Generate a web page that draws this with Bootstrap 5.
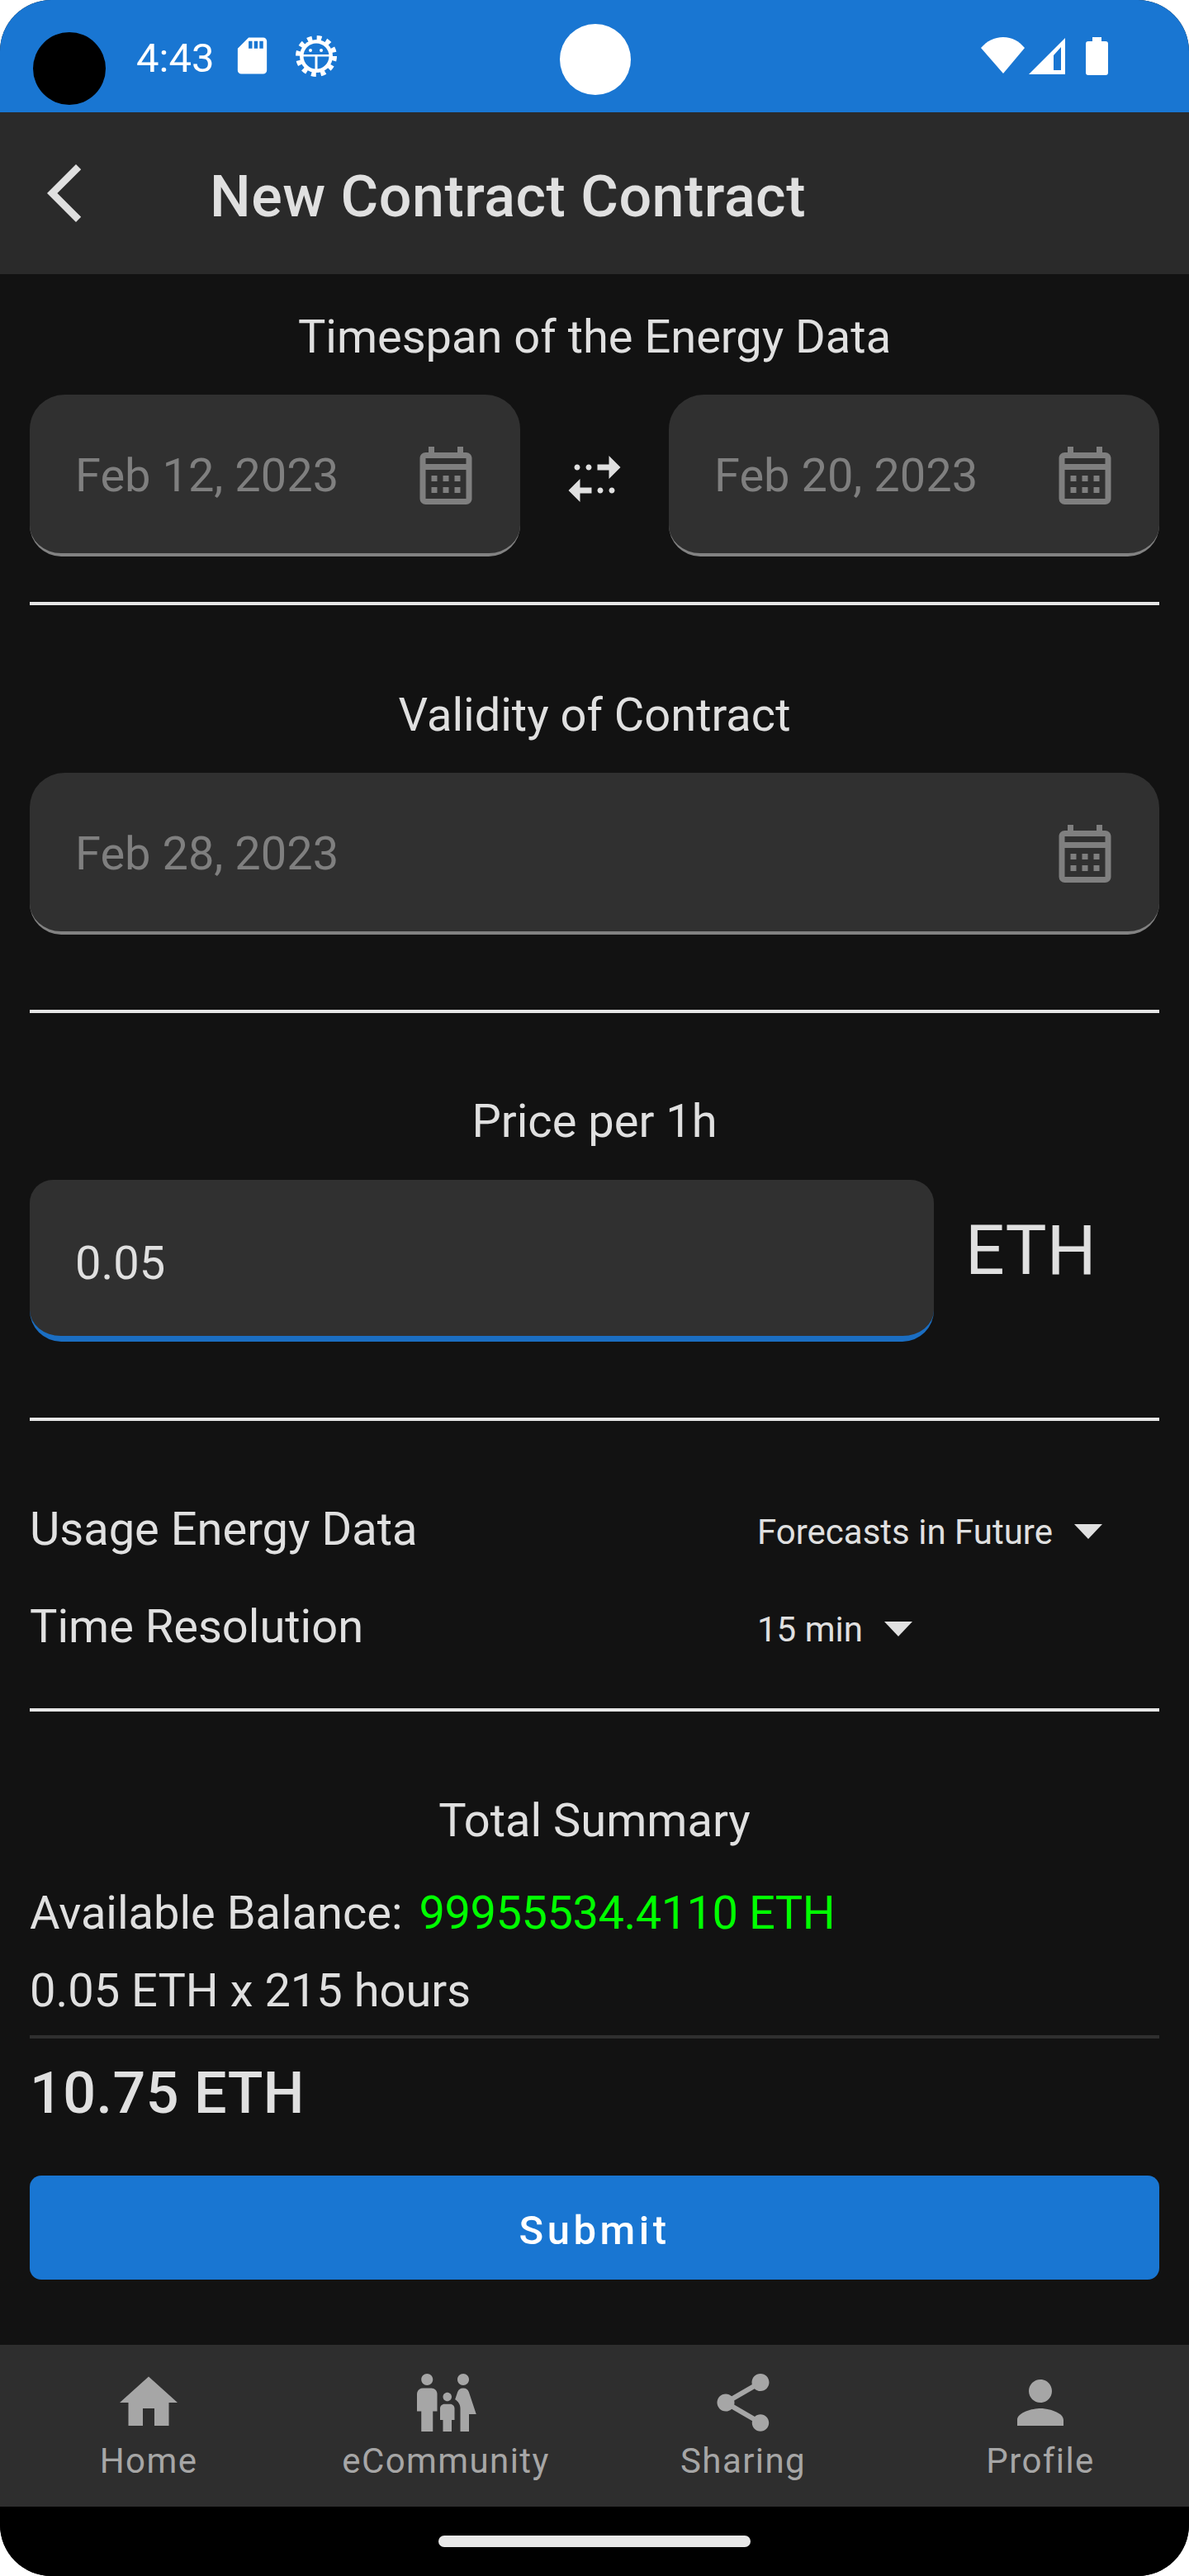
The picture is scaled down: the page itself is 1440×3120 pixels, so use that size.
<!DOCTYPE html>
<html lang="en">
<head>
    <meta charset="UTF-8">
    <meta name="viewport" content="width=device-width, initial-scale=1.0">
    <title>New Contract Contract</title>
    <link href="https://cdn.jsdelivr.net/npm/bootstrap@5.3.0/dist/css/bootstrap.min.css" rel="stylesheet">
    <style>
        body { background: #fff; font-family: Roboto, "Liberation Sans", sans-serif; color: #e0e0e0; }
        .phone-screen { width: 1440px; height: 3120px; border-radius: 62px; overflow: hidden; background: #121212; }

        /* status bar */
        .status-bar { height: 136px; background: #1976d2; color: #fff; padding: 0 98px 0 165px; }
        .status-time { font-size: 49px; line-height: 1; margin-top: 46px; width: 114px; }
        .status-bar svg { fill: #fff; display: block; }
        .status-icons-left { margin-top: 41px; }
        .status-icons-right { margin-top: 45px; }
        .gear-icon { margin: 2px 0 0 26px; }
        .signal-icon { margin: 1px 25px 0 4px; }
        .camera-dot { width: 88px; height: 88px; left: 40px; top: 39px; background: #000; }
        .white-dot { width: 86px; height: 86px; left: 678px; top: 29px; background: #fff; }

        /* app bar */
        .app-bar { height: 196px; background: #2a2a2a; padding-left: 36px; }
        .app-bar svg { width: 84px; height: 84px; fill: #e0e0e0; margin-right: 134px; }
        .app-title { font-size: 70px; font-weight: 500; line-height: 1; letter-spacing: .5px; padding-top: 8px; }

        /* form */
        .form-area { padding: 0 36px; }
        .field-title { font-size: 56px; line-height: 72px; text-align: center; }
        .date-box { height: 196px; background: #303030; border-radius: 42px 42px 38px 38px; border-bottom: 4px solid #828282; padding: 4px 48px 0 55px; font-size: 56px; color: #7f7f7f; }
        .date-box svg { width: 84px; height: 84px; fill: #7f7f7f; }
        .swap-col { width: 180px; padding-top: 8px; }
        .swap-col svg { width: 84px; height: 84px; fill: #e0e0e0; }
        .white-rule { height: 4px; background: #e6e6e6; }
        .price-box { width: 1095px; height: 196px; background: #303030; border-radius: 28px 28px 38px 38px; border-bottom: 7px solid #1b6ec2; padding: 12px 55px 0; font-size: 56px; color: #e0e0e0; }
        .unit-text { font-size: 84px; line-height: 1; margin-left: 38px; margin-top: 44px; }
        .option-row { height: 118px; font-size: 56px; }
        .option-label { width: 881px; }
        .option-value { font-size: 42px; margin-top: 6px; }
        .caret-down { width: 0; height: 0; border-left: 17px solid transparent; border-right: 17px solid transparent; border-top: 18px solid #e0e0e0; margin-left: 26px; }
        .summary-line { font-size: 56px; line-height: 72px; }
        .balance-value { color: #0f0; margin-left: 20px; letter-spacing: -.5px; }
        .thin-rule { height: 4px; background: #2f2f2f; }
        .total-amount { font-size: 70px; font-weight: 500; line-height: 84px; letter-spacing: .5px; }
        .submit-btn { height: 126px; background: #1976d2; color: #fff; font-size: 49px; font-weight: 500; letter-spacing: 4.5px; border-radius: 14px; border: 0; padding-top: 14px; }

        /* bottom nav */
        .bottom-nav { height: 196px; background: #2e2e2e; color: #a6a6a6; }
        .bottom-nav svg { width: 84px; height: 84px; fill: #a6a6a6; display: block; margin-top: 28px; }
        .nav-label { font-size: 42px; line-height: 50px; letter-spacing: 1.4px; margin-top: 4px; }
        .gesture-bar { height: 84px; background: #000; padding-top: 35px; }
        .gesture-pill { width: 378px; height: 14px; background: #e8e8e8; border-radius: 7px; }
    </style>
</head>
<body class="m-0">
    <div class="phone-screen d-flex flex-column position-relative">
        <!-- Status bar -->
        <div class="status-bar d-flex flex-shrink-0">
            <div class="status-time">4:43</div>
            <div class="status-icons-left d-flex">
                <svg width="53" height="53" viewBox="0 0 24 24"><path d="M18 2h-8L4.020 8 4 20c0 1.100.9 2 2 2h12c1.100 0 2-.9 2-2V4c0-1.100-.9-2-2-2zm-6 6h-2V4h2v4zm3 0h-2V4h2v4zm3 0h-2V4h2v4z"/></svg>
                <svg class="gear-icon" width="50" height="50" viewBox="0 0 50 50">
                    <circle cx="25" cy="25" r="21.500" fill="none" stroke="#fff" stroke-width="7" stroke-dasharray="5.630 5.630"/>
                    <circle cx="25" cy="25" r="20"/>
                    <circle cx="25" cy="25" r="15.500" fill="#1976d2"/>
                    <circle cx="18" cy="18" r="2"/>
                    <circle cx="31" cy="18" r="2"/>
                    <rect x="9" y="23" width="32" height="2.500"/>
                    <rect x="23.500" y="24" width="3" height="17"/>
                </svg>
            </div>
            <div class="status-icons-right d-flex ms-auto">
                <svg width="54" height="44" viewBox="0 0 54 44"><path d="M27 44 0 13C7 5 16 0 27 0S46 5 53 13z"/></svg>
                <svg class="signal-icon" width="44" height="44" viewBox="0 0 44 44"><path fill-rule="evenodd" d="M44 0V44H0zM39 11 30 21V39H39z"/></svg>
                <svg width="27" height="46" viewBox="0 0 27 46"><path d="M8 0h11v5h5a3 3 0 0 1 3 3v35a3 3 0 0 1-3 3H3a3 3 0 0 1-3-3V8a3 3 0 0 1 3-3h5z"/></svg>
            </div>
        </div>
        <div class="camera-dot position-absolute rounded-circle"></div>
        <div class="white-dot position-absolute rounded-circle"></div>

        <!-- App bar -->
        <div class="app-bar d-flex align-items-center flex-shrink-0">
            <svg viewBox="0 0 24 24"><path d="M17.770 3.770 16 2 6 12l10 10 1.770-1.770L9.540 12z"/></svg>
            <div class="app-title">New Contract Contract</div>
        </div>

        <!-- Form -->
        <div class="form-area flex-grow-1">
            <div class="field-title" style="margin-top:40px">Timespan of the Energy Data</div>
            <div class="d-flex" style="margin-top:34px">
                <div class="date-box flex-fill d-flex align-items-center justify-content-between">
                    <span>Feb 12, 2023</span>
                    <svg viewBox="0 0 24 24"><use href="#cal"/></svg>
                </div>
                <div class="swap-col d-flex align-items-center justify-content-center flex-shrink-0">
                    <svg viewBox="0 0 24 24"><path d="M17 4l4 4-4 4V9h-4V7h4V4zM10 7c-.55 0-1 .45-1 1s.45 1 1 1 1-.45 1-1-.45-1-1-1zM6 7c-.55 0-1 .45-1 1s.45 1 1 1 1-.45 1-1-.45-1-1-1zM7 17h4v-2H7v-3l-4 4 4 4v-3zM14 17c.55 0 1-.45 1-1s-.45-1-1-1-1 .45-1 1 .45 1 1 1zM18 17c.55 0 1-.45 1-1s-.45-1-1-1-1 .45-1 1 .45 1 1 1z"/></svg>
                </div>
                <div class="date-box flex-fill d-flex align-items-center justify-content-between">
                    <span>Feb 20, 2023</span>
                    <svg viewBox="0 0 24 24"><use href="#cal"/></svg>
                </div>
            </div>
            <div class="white-rule" style="margin-top:55px"></div>

            <div class="field-title" style="margin-top:97px">Validity of Contract</div>
            <div class="date-box d-flex align-items-center justify-content-between" style="margin-top:34px">
                <span>Feb 28, 2023</span>
                <svg viewBox="0 0 24 24"><use href="#cal"/></svg>
            </div>
            <div class="white-rule" style="margin-top:91px"></div>

            <div class="field-title" style="margin-top:95px">Price per 1h</div>
            <div class="d-flex" style="margin-top:35px">
                <div class="price-box d-flex align-items-center">0.05</div>
                <div class="unit-text">ETH</div>
            </div>
            <div class="white-rule" style="margin-top:92px"></div>

            <div class="option-row d-flex align-items-center" style="margin-top:72px">
                <div class="option-label">Usage Energy Data</div>
                <div class="option-value d-flex align-items-center">Forecasts in Future<span class="caret-down"></span></div>
            </div>
            <div class="option-row d-flex align-items-center">
                <div class="option-label">Time Resolution</div>
                <div class="option-value d-flex align-items-center">15 min<span class="caret-down"></span></div>
            </div>
            <div class="white-rule" style="margin-top:40px"></div>

            <div class="field-title" style="margin-top:96px">Total Summary</div>
            <div class="summary-line d-flex" style="margin-top:40px">Available Balance:<span class="balance-value">99955534.4110 ETH</span></div>
            <div class="summary-line" style="margin-top:22px">0.05 ETH x 215 hours</div>
            <div class="thin-rule" style="margin-top:18px"></div>
            <div class="total-amount" style="margin-top:24px">10.75 ETH</div>
            <button class="submit-btn btn w-100" style="margin-top:58px">Submit</button>
        </div>

        <!-- Bottom navigation -->
        <div class="bottom-nav row g-0 flex-shrink-0">
            <div class="col-3 d-flex flex-column align-items-center">
                <svg viewBox="0 0 24 24"><path d="M10 20v-6h4v6h5v-8h3L12 3 2 12h3v8z"/></svg>
                <div class="nav-label">Home</div>
            </div>
            <div class="col-3 d-flex flex-column align-items-center">
                <svg viewBox="0 0 24 24"><path d="M16 4c0-1.110.89-2 2-2s2 .89 2 2-.89 2-2 2-2-.89-2-2zm4 18v-6h2.500l-2.540-7.630A2.010 2.010 0 0 0 18.060 7h-.12a2 2 0 0 0-1.900 1.370l-.86 2.580c1.080.6 1.820 1.730 1.820 3.050v8h3zm-7.500-10.500c.83 0 1.500-.67 1.500-1.500s-.67-1.500-1.500-1.500S11 9.170 11 10s.67 1.500 1.500 1.500zM5.500 6c1.110 0 2-.89 2-2s-.89-2-2-2-2 .89-2 2 .89 2 2 2zm2 16v-7H9V9c0-1.100-.9-2-2-2H4c-1.100 0-2 .9-2 2v6h1.500v7h4zm6.500 0v-4h1v-4c0-.82-.68-1.500-1.500-1.500h-2c-.82 0-1.500.68-1.500 1.500v4h1v4h3z"/></svg>
                <div class="nav-label">eCommunity</div>
            </div>
            <div class="col-3 d-flex flex-column align-items-center">
                <svg viewBox="0 0 24 24"><path d="M18 16.080c-.76 0-1.440.3-1.960.77L8.910 12.700c.05-.23.09-.46.09-.7s-.04-.47-.09-.7l7.050-4.110c.54.5 1.250.81 2.040.81 1.660 0 3-1.340 3-3s-1.340-3-3-3-3 1.340-3 3c0 .24.04.47.09.7L8.040 9.810C7.500 9.310 6.790 9 6 9c-1.660 0-3 1.340-3 3s1.340 3 3 3c.79 0 1.500-.31 2.040-.81l7.120 4.160c-.05.21-.08.43-.08.65 0 1.610 1.310 2.920 2.920 2.920 1.610 0 2.920-1.310 2.920-2.920s-1.310-2.920-2.920-2.920z"/></svg>
                <div class="nav-label">Sharing</div>
            </div>
            <div class="col-3 d-flex flex-column align-items-center">
                <svg viewBox="0 0 24 24"><path d="M12 12c2.210 0 4-1.790 4-4s-1.790-4-4-4-4 1.790-4 4 1.790 4 4 4zm0 2c-2.670 0-8 1.340-8 4v2h16v-2c0-2.660-5.330-4-8-4z"/></svg>
                <div class="nav-label">Profile</div>
            </div>
        </div>

        <!-- Gesture bar -->
        <div class="gesture-bar d-flex justify-content-center flex-shrink-0">
            <div class="gesture-pill"></div>
        </div>
    </div>

    <!-- Shared calendar icon -->
    <svg width="0" height="0" class="position-absolute">
        <symbol id="cal" viewBox="0 0 24 24"><path d="M19 4h-1V2h-2v2H8V2H6v2H5c-1.110 0-1.990.9-1.990 2L3 20a2 2 0 0 0 2 2h14c1.100 0 2-.9 2-2V6c0-1.100-.9-2-2-2zm0 16H5V10h14v10zm0-12H5V6h14v2zM9 14H7v-2h2v2zm4 0h-2v-2h2v2zm4 0h-2v-2h2v2zm-8 4H7v-2h2v2zm4 0h-2v-2h2v2zm4 0h-2v-2h2v2z"/></symbol>
    </svg>

    <script src="https://cdn.jsdelivr.net/npm/bootstrap@5.3.0/dist/js/bootstrap.bundle.min.js"></script>
</body>
</html>
